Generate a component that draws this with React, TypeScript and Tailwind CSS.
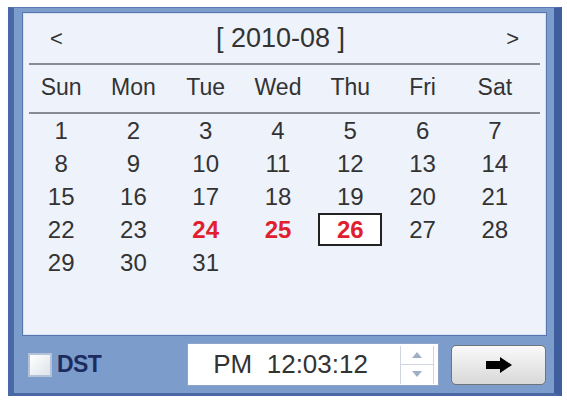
import React from "react";

const days = ["Sun", "Mon", "Tue", "Wed", "Thu", "Fri", "Sat"];

// August 2010 starts on a Sunday
const weeks: (number | null)[][] = [
  [1, 2, 3, 4, 5, 6, 7],
  [8, 9, 10, 11, 12, 13, 14],
  [15, 16, 17, 18, 19, 20, 21],
  [22, 23, 24, 25, 26, 27, 28],
  [29, 30, 31, null, null, null, null],
];

const marked = [24, 25, 26];
const selected = 26;

const DayCell: React.FC<{ day: number | null }> = ({ day }) => {
  if (day === null) return <div className="h-[33px]" />;
  const isMarked = marked.includes(day);
  const isSelected = day === selected;
  return (
    <div className="h-[33px] flex items-center justify-center">
      <div
        className={
          "h-[33px] w-[64px] flex items-center justify-center" +
          (isSelected ? " border-2 border-[#222] bg-white" : "") +
          (isMarked ? " text-[#e0202c] font-bold" : " text-[#333]")
        }
      >
        {day}
      </div>
    </div>
  );
};

export default function App() {
  return (
    <div
      className="w-[567px] h-[401px] bg-white pt-[7px] pl-[8px]"
      style={{ fontFamily: '"Liberation Sans", Arial, sans-serif' }}
    >
      <div className="w-[554px] h-[389px] flex flex-col bg-[#7c9ccc] border-l-[6px] border-l-[#4868a6] border-r-[8px] border-r-[#3f5e9e] border-t border-t-[#5a7ab4] border-b-[3px] border-b-[#4a69a4] pl-[8px] pr-[7px] pt-[4px]">
        {/* calendar panel */}
        <div className="h-[324px] bg-[#eef2fa] border border-[#5877ae] shadow-[inset_0_0_0_1px_#d6e2f4] flex flex-col">
          <div className="h-[50px] flex items-center justify-between px-[27px] text-[22px] text-[#333]">
            <span>&lt;</span>
            <span className="-ml-[8px] text-[27px]">[ 2010-08 ]</span>
            <span>&gt;</span>
          </div>
          <div className="mx-[6px] h-[2px] bg-[#868c94]" />
          <div className="grid grid-cols-7 w-[506px] ml-[2px] h-[47px] pb-[3px] items-center text-[23px] text-[#333]">
            {days.map((d) => (
              <div key={d} className="text-center">
                {d}
              </div>
            ))}
          </div>
          <div className="mx-[6px] h-[2px] bg-[#868c94]" />
          <div className="grid grid-cols-7 w-[506px] ml-[2px] text-[24px] leading-none">
            {weeks.flat().map((d, i) => (
              <DayCell key={i} day={d} />
            ))}
          </div>
        </div>

        {/* bottom bar */}
        <div className="flex-1 flex items-center pl-[6px]">
          <div className="w-[24px] h-[24px] border-2 border-[#b4c2d8] bg-gradient-to-br from-white to-[#dde3ea]" />
          <span className="ml-[5px] text-[23px] font-bold text-[#1d2c5e] tracking-tight">DST</span>
          <div className="ml-[86px] w-[252px] h-[43px] bg-white border border-[#8ea4c6] flex items-center">
            <span className="ml-[25px] text-[26px] text-[#333]">PM&nbsp;&nbsp;12:03:12</span>
            <div className="ml-auto mr-[4px] w-[34px] h-[38px] flex flex-col border-x border-[#d0d6e0]">
              <div className="flex-1 flex items-center justify-center border-b border-[#d0d6e0]">
                <svg width="10" height="6" viewBox="0 0 10 6">
                  <path d="M0 6 L5 0 L10 6 Z" fill="#a2aec4" />
                </svg>
              </div>
              <div className="flex-1 flex items-center justify-center">
                <svg width="10" height="6" viewBox="0 0 10 6">
                  <path d="M0 0 L5 6 L10 0 Z" fill="#a2aec4" />
                </svg>
              </div>
            </div>
          </div>
          <button className="ml-[12px] w-[95px] h-[40px] rounded-[5px] border border-[#6f7478] bg-gradient-to-b from-[#fafafa] to-[#d8d8d8] flex items-center justify-center">
            <svg width="26" height="16" viewBox="0 0 26 16">
              <path d="M0 4 H14 V0 L26 8 L14 16 V12 H0 Z" fill="#000" />
            </svg>
          </button>
        </div>
      </div>
    </div>
  );
}
